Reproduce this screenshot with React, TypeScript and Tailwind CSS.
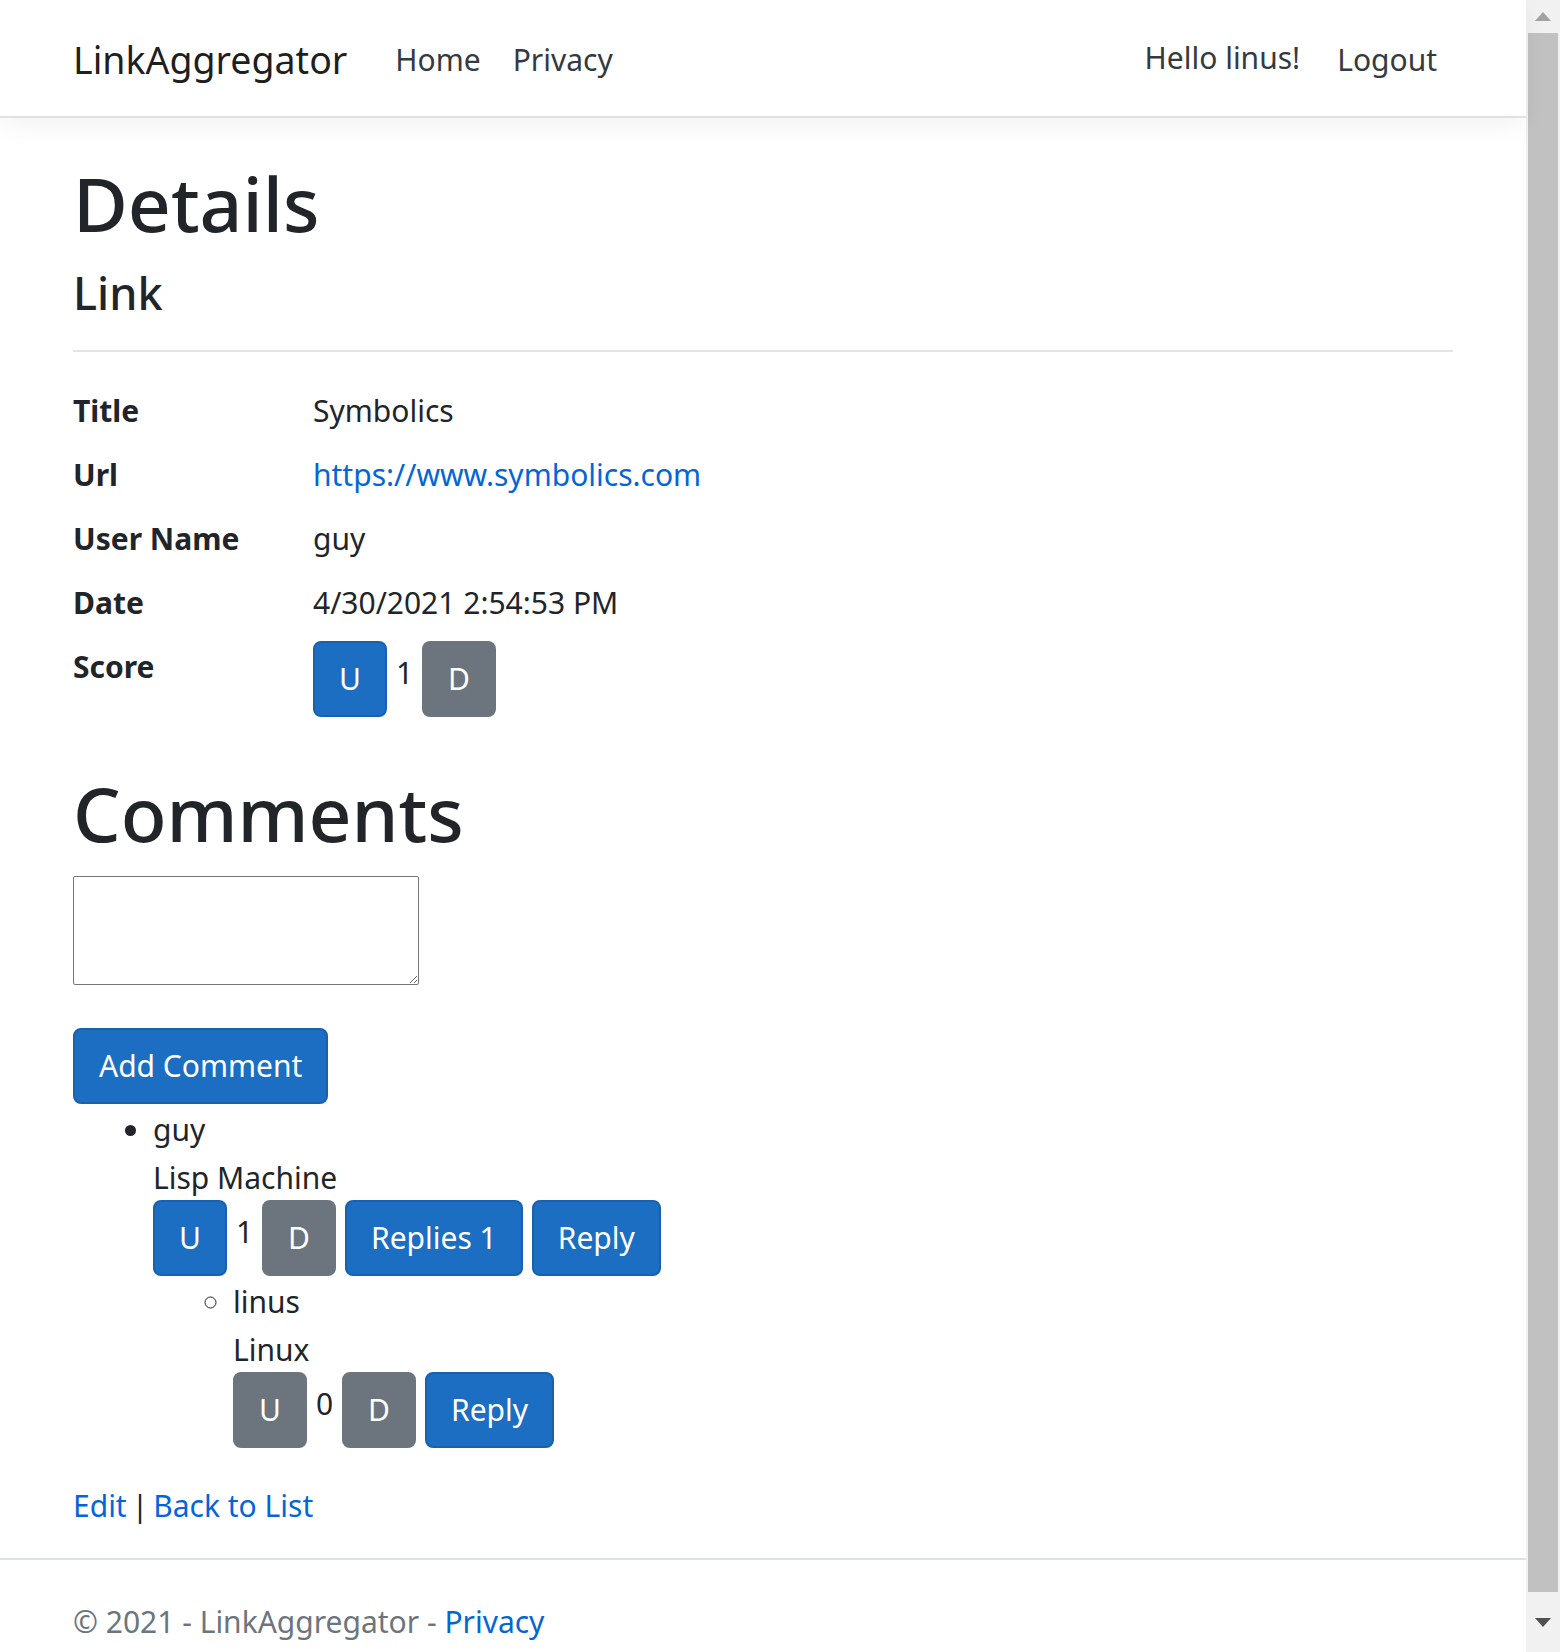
import React from 'react';

type Kind = 'primary' | 'secondary';

const Btn = ({ kind, children }: { kind: Kind; children: React.ReactNode }) => (
  <button
    className={`h-[76px] px-[24px] rounded-[8px] border-2 text-[30px] leading-[48px] text-white shrink-0 ${
      kind === 'primary' ? 'bg-[#1b6ec2] border-[#1861ac]' : 'bg-[#6c757d] border-[#6c757d]'
    }`}
  >
    {children}
  </button>
);

const Votes = ({ score, upKind, children }: { score: number; upKind: Kind; children?: React.ReactNode }) => (
  <div className="flex items-start gap-[9px]">
    <Btn kind={upKind}>U</Btn>
    <span className="mt-[8px] leading-[48px]">{score}</span>
    <Btn kind="secondary">D</Btn>
    {children}
  </div>
);

const rows: [string, React.ReactNode][] = [
  ['Title', 'Symbolics'],
  ['Url', <a className="text-[#0366d6]">https://www.symbolics.com</a>],
  ['User Name', 'guy'],
  ['Date', '4/30/2021 2:54:53 PM'],
];

export default function App() {
  return (
    <div className="flex h-[1652px] overflow-hidden bg-white text-[#212529] font-['Segoe_UI','Noto_Sans',sans-serif] text-[30px] leading-[48px]">
      <div className="flex-1 min-w-0 flex flex-col">
        {/* navbar */}
        <header className="relative z-10 h-[118px] shrink-0 border-b-2 border-[#dee2e6] bg-white shadow-[0_8px_24px_rgba(0,0,0,0.05)]">
          <div className="mx-auto w-[1440px] h-full px-[30px] pt-[4px] flex items-center">
            <span className="text-[37.5px] leading-[60px] text-black/90 mr-[32px]">LinkAggregator</span>
            <nav className="flex text-[#343a40]">
              <a className="px-[16px]">Home</a>
              <a className="px-[16px]">Privacy</a>
            </nav>
            <div className="ml-auto flex items-center text-[#343a40]">
              <a className="pl-[16px] pr-[21px] -mt-[4px]">Hello linus!</a>
              <button className="px-[16px]">Logout</button>
            </div>
          </div>
        </header>

        {/* main */}
        <main className="mx-auto w-[1440px] px-[30px] pt-[37px] pb-[28px] shrink-0">
          <h1 className="text-[75px] leading-[96px] font-medium mb-[13px]">Details</h1>
          <h4 className="text-[45px] leading-[58px] font-medium">Link</h4>
          <hr className="mt-[28px] mb-[35px] border-t-2 border-black/10" />
          <dl className="grid grid-cols-[240px_1fr] mb-[32px]">
            {rows.map(([k, v]) => (
              <React.Fragment key={k}>
                <dt className="font-bold mb-[16px]">{k}</dt>
                <dd className="mb-[16px]">{v}</dd>
              </React.Fragment>
            ))}
            <dt className="font-bold mb-[16px]">Score</dt>
            <dd className="mb-[16px] -mt-[2px]">
              <Votes score={1} upKind="primary" />
            </dd>
          </dl>

          <h1 className="text-[75px] leading-[96px] font-medium mb-[15px]">Comments</h1>
          <textarea className="block w-[346px] h-[109px] border border-[#767676] rounded-[2px] mb-[43px]" />
          <Btn kind="primary">Add Comment</Btn>

          <ul className="list-disc pl-[80px] mb-[34px]">
            <li>
              <div className="pt-[2px] -mb-[2px]">guy</div>
              <div className="pt-[2px] -mb-[2px]">Lisp Machine</div>
              <Votes score={1} upKind="primary">
                <Btn kind="primary">Replies 1</Btn>
                <Btn kind="primary">Reply</Btn>
              </Votes>
              <ul className="list-[circle] pl-[80px]">
                <li>
                  <div className="pt-[2px] -mb-[2px]">linus</div>
                  <div className="pt-[2px] -mb-[2px]">Linux</div>
                  <Votes score={0} upKind="secondary">
                    <Btn kind="primary">Reply</Btn>
                  </Votes>
                </li>
              </ul>
            </li>
          </ul>

          <div>
            <a className="text-[#0366d6]">Edit</a>
            <span className="mx-[5px]">|</span>
            <a className="text-[#0366d6]">Back to List</a>
          </div>
        </main>

        {/* footer */}
        <footer className="shrink-0 border-t-2 border-[#dee2e6] text-[#6c757d] leading-[124px]">
          <div className="mx-auto w-[1440px] px-[30px]">
            © 2021 - LinkAggregator - <a className="text-[#0366d6]">Privacy</a>
          </div>
        </footer>
      </div>

      {/* scrollbar */}
      <div className="w-[34px] shrink-0 bg-[#f1f1f1] flex flex-col items-center">
        <div className="h-[33px] w-full flex items-center justify-center">
          <svg width="16" height="9" viewBox="0 0 16 9"><path d="M0 9 L8 0 L16 9 Z" fill="#a3a3a3" /></svg>
        </div>
        <div className="w-[30px] h-[1559px] bg-[#c1c1c1]" />
        <div className="flex-1 w-full flex items-center justify-center">
          <svg width="16" height="9" viewBox="0 0 16 9"><path d="M0 0 L16 0 L8 9 Z" fill="#505050" /></svg>
        </div>
      </div>
    </div>
  );
}
